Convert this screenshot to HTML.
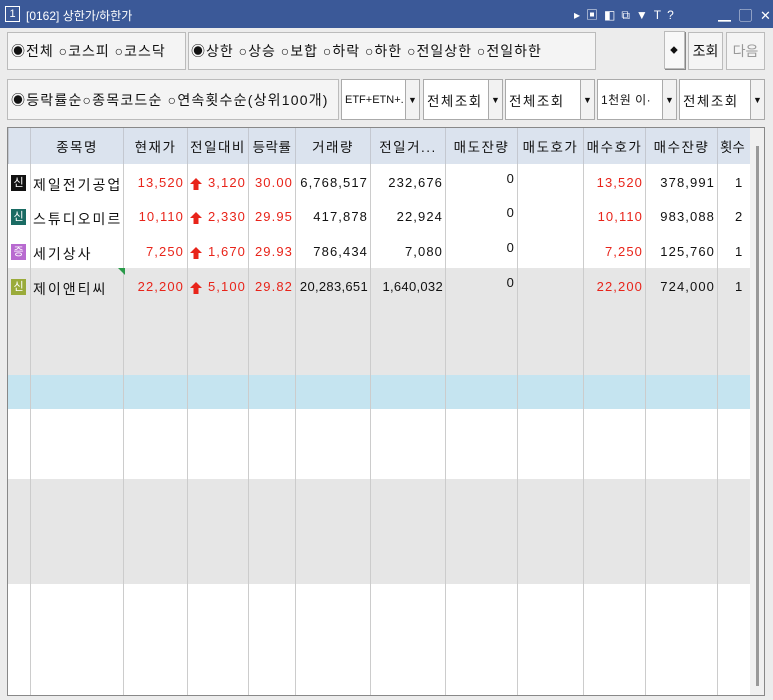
<!DOCTYPE html>
<html><head><meta charset="utf-8"><style>
*{box-sizing:border-box;margin:0;padding:0}
body{width:773px;height:700px;background:#ececec;font-family:"Liberation Sans","Noto Sans CJK KR",sans-serif;font-size:13px;color:#111;position:relative;overflow:hidden;letter-spacing:1px}
.abs{position:absolute}
.title{left:0;top:0;width:773px;height:28px;background:#3b5998;color:#fff;font-size:12px;letter-spacing:0}
.box{background:#f4f4f4;border:1px solid #bbb;display:flex;align-items:center;white-space:nowrap;font-size:14px}
.sel{background:#fff;border:1px solid #aaa;display:flex;align-items:center;font-size:13.5px;padding-left:3px;letter-spacing:1.5px}
.sel .ar{position:absolute;right:0;top:0;bottom:0;width:14px;border-left:1px solid #aaa;background:#f2f2f2;font-size:9px;display:flex;align-items:center;justify-content:center;letter-spacing:0}
.grid{left:7px;top:127px;width:758px;height:569px;border:1px solid #888;background:#fff;overflow:hidden}
.c{position:absolute;top:0;height:100%;border-left:1px solid #ccc}
.hd{position:absolute;top:0;height:36px;background:#dbe3ee;font-size:13.5px;display:flex;align-items:center;justify-content:center;border-left:1px solid #c4c8d0;letter-spacing:1.5px}
.cell{position:absolute;font-size:13px;text-align:right;white-space:nowrap;letter-spacing:1.1px}
.r{color:#e8241a}
.tag{position:absolute;left:3px;width:15px;height:16px;color:#fff;font-size:11px;text-align:center;line-height:16px;letter-spacing:0}
.nm{left:25px;font-size:14px;letter-spacing:2px}
.arw{position:absolute;left:182px;top:3px}
</style></head><body>
<div class="abs title">
 <div class="abs" style="left:5px;top:6px;width:15px;height:16px;border:1px solid #fff;font-size:11px;line-height:14px;text-align:center">1</div>
 <div class="abs" style="left:26px;top:7px">[0162] 상한가/하한가</div>
 <div class="abs" style="left:574px;top:6px;font-size:12px;letter-spacing:6px">▸▣◧⧉▼T?</div>
 <div class="abs" style="left:718px;top:5px;font-size:13px;letter-spacing:8px">▁▢✕</div>
</div>
<div class="abs box" style="left:7px;top:32px;width:179px;height:38px;padding-left:3px">◉전체 ○코스피 ○코스닥</div>
<div class="abs box" style="left:188px;top:32px;width:408px;height:38px;padding-left:2px">◉상한 ○상승 ○보합 ○하락 ○하한 ○전일상한 ○전일하한</div>
<div class="abs box" style="left:664px;top:31px;width:21px;height:38px;justify-content:center;background:#f8f8f8;box-shadow:1px 1px 0 #888;font-size:11px">⬥</div>
<div class="abs box" style="left:688px;top:32px;width:35px;height:38px;justify-content:center;letter-spacing:0">조회</div>
<div class="abs box" style="left:726px;top:32px;width:39px;height:38px;justify-content:center;color:#999;letter-spacing:0">다음</div>
<div class="abs box" style="left:7px;top:79px;width:332px;height:41px;padding-left:3px;overflow:hidden;letter-spacing:1.2px">◉등락률순○종목코드순 ○연속횟수순(상위100개)</div>
<div class="abs sel" style="left:341px;top:79px;width:79px;height:41px;font-size:11px;letter-spacing:0">ETF+ETN+.<span class="ar">▼</span></div>
<div class="abs sel" style="left:423px;top:79px;width:80px;height:41px">전체조회<span class="ar">▼</span></div>
<div class="abs sel" style="left:505px;top:79px;width:90px;height:41px">전체조회<span class="ar">▼</span></div>
<div class="abs sel" style="left:597px;top:79px;width:80px;height:41px;font-size:12px;letter-spacing:0.5px">1천원 이·<span class="ar">▼</span></div>
<div class="abs sel" style="left:679px;top:79px;width:86px;height:41px">전체조회<span class="ar">▼</span></div>

<div class="abs grid">
 <div class="abs" style="left:0;top:140px;width:742px;height:107px;background:#e6e6e6"></div>
 <div class="abs" style="left:0;top:247px;width:742px;height:34px;background:#c5e4f0"></div>
 <div class="abs" style="left:0;top:351px;width:742px;height:105px;background:#e6e6e6"></div>
 <div class="c" style="left:22px"></div><div class="c" style="left:115px"></div><div class="c" style="left:179px"></div><div class="c" style="left:240px"></div><div class="c" style="left:287px"></div><div class="c" style="left:362px"></div><div class="c" style="left:437px"></div><div class="c" style="left:509px"></div><div class="c" style="left:575px"></div><div class="c" style="left:637px"></div><div class="c" style="left:709px"></div>
 <div class="hd" style="left:0;width:22px"></div>
 <div class="hd" style="left:22px;width:93px">종목명</div>
 <div class="hd" style="left:115px;width:64px">현재가</div>
 <div class="hd" style="left:179px;width:61px">전일대비</div>
 <div class="hd" style="left:240px;width:47px;letter-spacing:0.5px">등락률</div>
 <div class="hd" style="left:287px;width:75px">거래량</div>
 <div class="hd" style="left:362px;width:75px">전일거...</div>
 <div class="hd" style="left:437px;width:72px">매도잔량</div>
 <div class="hd" style="left:509px;width:66px">매도호가</div>
 <div class="hd" style="left:575px;width:62px">매수호가</div>
 <div class="hd" style="left:637px;width:72px">매수잔량</div>
 <div class="hd" style="left:709px;width:33px;justify-content:flex-start;padding-left:2px;letter-spacing:0">횟수</div>
 <div class="abs" style="left:742px;top:0;width:16px;height:100%;background:#f0f0f0"></div>
 <div class="abs" style="left:748px;top:18px;width:3px;height:540px;background:#999"></div>
 <div class="abs" style="left:110px;top:140px;width:0;height:0;border-top:7px solid #2a9a4a;border-left:7px solid transparent"></div>

 <div style="position:absolute;top:47px;left:0;width:742px">
  <div class="tag" style="background:#111">신</div>
  <div class="cell nm">제일전기공업</div>
  <div class="cell r" style="right:566px">13,520</div>
  <svg class="arw" width="12" height="12" viewBox="0 0 12 12"><path d="M6 0L12 6H8.5V12H3.5V6H0Z" fill="#e8241a"/></svg><div class="cell r" style="right:504px">3,120</div>
  <div class="cell r" style="right:457px">30.00</div>
  <div class="cell" style="right:382px">6,768,517</div>
  <div class="cell" style="right:307px">232,676</div>
  <div class="cell" style="right:235px;top:-4px">0</div>
  <div class="cell r" style="right:107px">13,520</div>
  <div class="cell" style="right:35px">378,991</div>
  <div class="cell" style="left:727px">1</div>
 </div>
 <div style="position:absolute;top:81px;left:0;width:742px">
  <div class="tag" style="background:#1a6b63">신</div>
  <div class="cell nm">스튜디오미르</div>
  <div class="cell r" style="right:566px">10,110</div>
  <svg class="arw" width="12" height="12" viewBox="0 0 12 12"><path d="M6 0L12 6H8.5V12H3.5V6H0Z" fill="#e8241a"/></svg><div class="cell r" style="right:504px">2,330</div>
  <div class="cell r" style="right:457px">29.95</div>
  <div class="cell" style="right:382px">417,878</div>
  <div class="cell" style="right:307px">22,924</div>
  <div class="cell" style="right:235px;top:-4px">0</div>
  <div class="cell r" style="right:107px">10,110</div>
  <div class="cell" style="right:35px">983,088</div>
  <div class="cell" style="left:727px">2</div>
 </div>
 <div style="position:absolute;top:116px;left:0;width:742px">
  <div class="tag" style="background:#b86ad0">증</div>
  <div class="cell nm">세기상사</div>
  <div class="cell r" style="right:566px">7,250</div>
  <svg class="arw" width="12" height="12" viewBox="0 0 12 12"><path d="M6 0L12 6H8.5V12H3.5V6H0Z" fill="#e8241a"/></svg><div class="cell r" style="right:504px">1,670</div>
  <div class="cell r" style="right:457px">29.93</div>
  <div class="cell" style="right:382px">786,434</div>
  <div class="cell" style="right:307px">7,080</div>
  <div class="cell" style="right:235px;top:-4px">0</div>
  <div class="cell r" style="right:107px">7,250</div>
  <div class="cell" style="right:35px">125,760</div>
  <div class="cell" style="left:727px">1</div>
 </div>
 <div style="position:absolute;top:151px;left:0;width:742px">
  <div class="tag" style="background:#9aab3a">신</div>
  <div class="cell nm">제이앤티씨</div>
  <div class="cell r" style="right:566px">22,200</div>
  <svg class="arw" width="12" height="12" viewBox="0 0 12 12"><path d="M6 0L12 6H8.5V12H3.5V6H0Z" fill="#e8241a"/></svg><div class="cell r" style="right:504px">5,100</div>
  <div class="cell r" style="right:457px">29.82</div>
  <div class="cell" style="right:382px;letter-spacing:0.3px">20,283,651</div>
  <div class="cell" style="right:307px;letter-spacing:0.3px">1,640,032</div>
  <div class="cell" style="right:235px;top:-4px">0</div>
  <div class="cell r" style="right:107px">22,200</div>
  <div class="cell" style="right:35px">724,000</div>
  <div class="cell" style="left:727px">1</div>
 </div>
</div>
</body></html>
